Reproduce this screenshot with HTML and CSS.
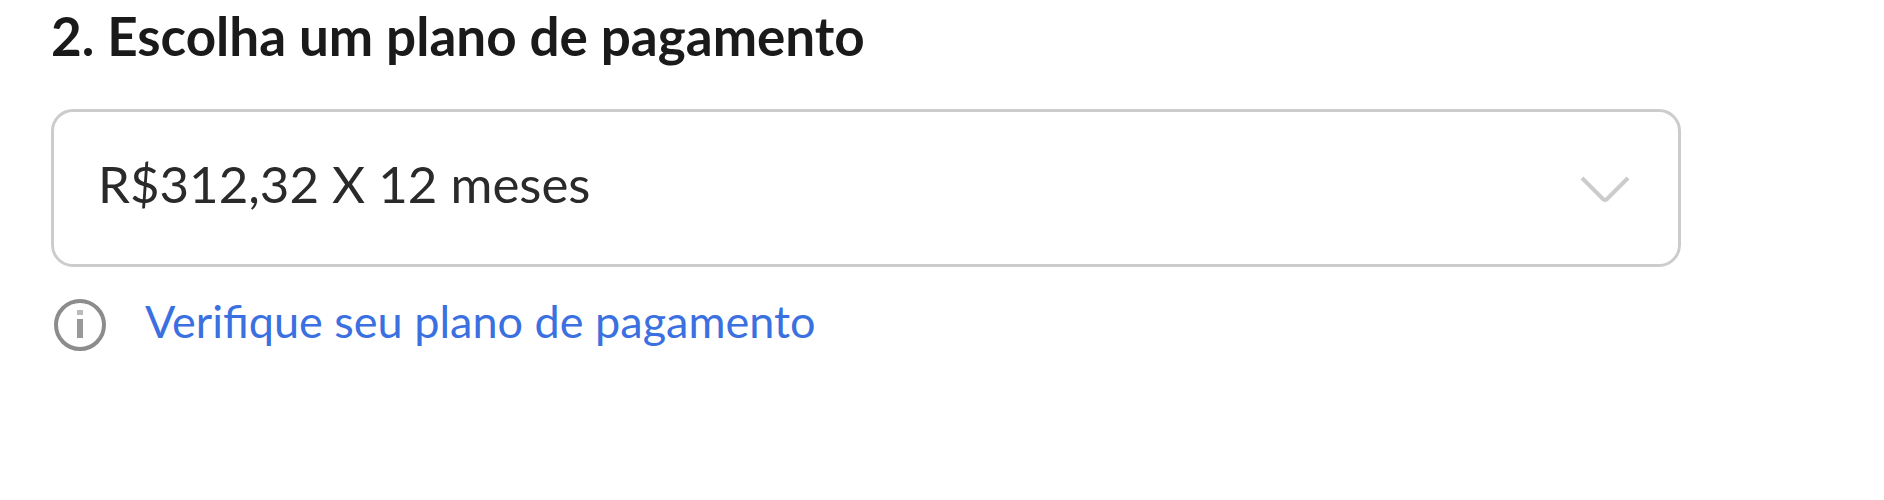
FILE: index.html
```
<!DOCTYPE html>
<html lang="pt-BR">
  <head>
    <meta charset="utf-8">
    <meta name="viewport" content="width=device-width">
    <title>Plano de pagamento</title>
    <link rel="stylesheet" href="styles.css">
  </head>
  <body>
    <form class="payment">
      <h2 class="title"><label for="plan">2. Escolha um plano de pagamento</label></h2>

      <div class="select">
        <select id="plan" name="plan">
          <option>R$312,32 X 12 meses</option>
        </select>
        <svg class="arrow" viewBox="0 0 52 28" aria-hidden="true">
          <path d="M2 2 L23 23 Q25 25 27 23 L48 2" />
        </svg>
      </div>

      <div class="info">
        <svg class="info-icon" viewBox="0 0 54 54" aria-hidden="true">
          <circle cx="27" cy="27" r="24" />
          <path class="dot" d="M27 12 V17" />
          <path class="stem" d="M27 21 V40" />
        </svg>
        <a href="#plano">Verifique seu plano de pagamento</a>
      </div>
    </form>
  </body>
</html>
```

FILE: styles.css
```
* {
  box-sizing: border-box;
}

body {
  margin: 0;
  background: #fff;
  color: #1a1a1a;
  font-family: Lato, "Liberation Sans", sans-serif;
}

.payment {
  padding: 6px 203px 24px 51px;
}

.title {
  margin: 0 0 43px;
  font-size: 53px;
  line-height: 60px;
  font-weight: 700;
}

/* The native arrow is hidden, ours lies over the select */
.select {
  position: relative;
}
.select select {
  display: block;
  width: 100%;
  height: 158px;
  padding: 0 120px 10px 44px;
  border: 3px solid #ccc;
  border-radius: 22px;
  background: #fff;
  color: #2a2a2a;
  font-family: inherit;
  font-size: 51px;
  appearance: none;
}
.arrow {
  position: absolute;
  top: 67px;
  right: 49px;
  width: 52px;
  height: 28px;
  fill: none;
  stroke: #ccc;
  stroke-width: 4;
  pointer-events: none;
}

.info {
  display: flex;
  align-items: flex-start;
  gap: 38px;
  margin-top: 31px;
  padding-left: 2px;
}
.info-icon {
  flex: none;
  width: 54px;
  height: 54px;
  fill: none;
  stroke: #8c8c8c;
  stroke-width: 4;
}
.info-icon .dot {
  stroke: #bbb;
  stroke-width: 6;
}
.info-icon .stem {
  stroke: #999;
  stroke-width: 6;
}
.info a {
  color: #3a70e0;
  font-size: 45px;
  line-height: 46px;
  text-decoration: none;
}
```
